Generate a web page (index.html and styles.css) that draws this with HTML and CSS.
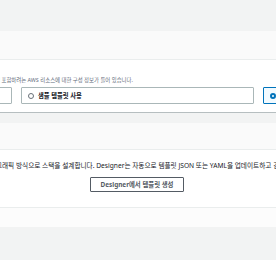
FILE: index.html
```html
<!DOCTYPE html>
<html lang="ko">
<head>
    <meta charset="UTF-8">
    <meta name="viewport" content="width=device-width, initial-scale=1.0">
    <title>스택 생성</title>
    <link rel="stylesheet" href="styles.css">
</head>
<body>
    <div class="page">
        <section class="card">
            <div class="card-head">
                <h2>템플릿 지정</h2>
            </div>
            <div class="card-body">
                <p class="desc desc-template">템플릿은 스택의 구성을 지정하는 JSON 또는 YAML 파일입니다. 템플릿에는 스택에 포함하려는 AWS 리소스에 대한 구성 정보가 들어 있습니다.</p>
                <div class="tiles">
                    <label class="tile">
                        <span class="radio"></span>
                        <span class="tile-label">준비된 템플릿</span>
                    </label>
                    <label class="tile">
                        <span class="radio"></span>
                        <span class="tile-label">샘플 템플릿 사용</span>
                    </label>
                    <label class="tile selected">
                        <span class="radio"></span>
                        <span class="tile-label">Designer에서 템플릿 생성</span>
                    </label>
                </div>
            </div>
        </section>

        <section class="card card-designer">
            <div class="card-head">
                <h2>Designer에서 템플릿 생성</h2>
            </div>
            <div class="card-body">
                <p class="desc desc-designer">AWS CloudFormation Designer를 사용하여 그래픽 방식으로 스택을 설계합니다. Designer는 자동으로 템플릿 JSON 또는 YAML을 업데이트하고 검증합니다.</p>
                <div class="actions">
                    <button class="btn">Designer에서 템플릿 생성</button>
                </div>
            </div>
            <div class="card-foot"></div>
        </section>
    </div>
</body>
</html>
```

FILE: styles.css
```css
body {
    margin: 0;
    padding: 0;
    background: #f2f3f3;
    font-family: "Noto Sans", "Noto Sans CJK KR", sans-serif;
    color: #16191f;
    overflow: hidden;
}

.page {
    width: 760px;
    margin-left: -241px;
    padding-top: 31px;
}

.card {
    background: #ffffff;
    box-shadow: 0 1px 0 0 #b6bec0;
}

.card-designer {
    margin-top: 11px;
    box-shadow: 0 2px 0 0 #d5dbdb;
}

.card-head {
    height: 29px;
    background: #fafafa;
    border-bottom: 1px solid #eaeded;
    padding-left: 20px;
    box-sizing: border-box;
}

.card-designer .card-head {
    height: 27px;
}

.card-head h2 {
    margin: 0;
    font-size: 8px;
    line-height: 27px;
    font-weight: 700;
}

.card-body {
    padding: 17px 20px 8px;
}

.card-designer .card-body {
    padding: 12px 20px 15px;
}

.desc {
    margin: 0;
    line-height: 7px;
    white-space: nowrap;
}

/* text ends inside the view, so anchor it at its end */
.desc-template {
    display: flex;
    justify-content: flex-end;
    width: 354px;
    color: #5f6b7a;
    font-size: 5.4px;
}

.desc-designer {
    color: #16191f;
    font-size: 6.65px;
    margin-left: 87px;
}

.tiles {
    display: grid;
    grid-template-columns: 233px 233px 233px;
    gap: 9px;
    margin-top: 3px;
}

.tile {
    display: flex;
    align-items: center;
    gap: 4px;
    height: 17px;
    padding-left: 6px;
    border: 1px solid #aab7b8;
    border-radius: 1px;
    background: #ffffff;
    box-sizing: border-box;
}

.tile.selected {
    border-color: #0073bb;
    background: #f1faff;
}

.radio {
    width: 6px;
    height: 6px;
    border: 1px solid #687078;
    border-radius: 50%;
    box-sizing: border-box;
    background: #ffffff;
}

.tile.selected .radio {
    border: 2px solid #0073bb;
}

.tile-label {
    font-size: 6.3px;
    font-weight: 600;
    color: #16191f;
}

.actions {
    margin-top: 8px;
    padding-left: 311px;
}

.btn {
    display: block;
    width: 94px;
    height: 15px;
    padding: 0;
    border: 1px solid #545b64;
    border-radius: 1px;
    background: #ffffff;
    color: #545b64;
    font-family: "Noto Sans", "Noto Sans CJK KR", sans-serif;
    font-size: 6.4px;
    font-weight: 700;
}

.card-foot {
    height: 20px;
    background: #fcfcfc;
    border-top: 1px solid #eaeded;
    box-sizing: border-box;
}
```
